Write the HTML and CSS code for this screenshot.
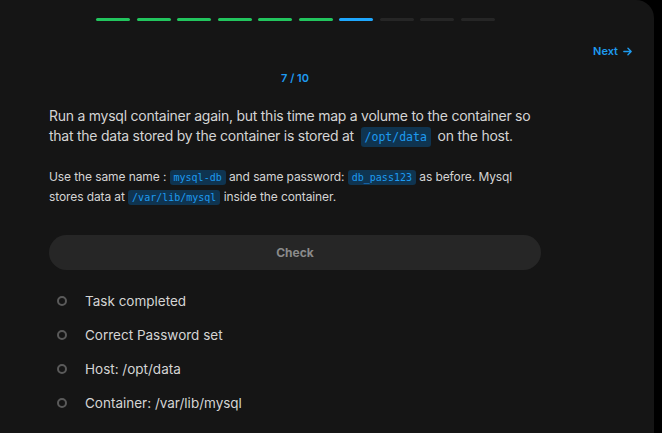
FILE: index.html
```html
<!DOCTYPE html>
<html>
<head>
<meta charset="utf-8">
<link rel="stylesheet" href="styles.css">
</head>
<body>
<div class="panel">
  <div class="progress">
    <span class="seg done"></span><span class="seg done"></span><span class="seg done"></span><span class="seg done"></span><span class="seg done"></span><span class="seg done"></span><span class="seg current"></span><span class="seg"></span><span class="seg"></span><span class="seg"></span>
  </div>
  <div class="nav">
    <a class="next">Next <svg width="11" height="11" viewBox="0 0 12 12" fill="none" stroke="currentColor" stroke-width="1.5" stroke-linecap="round" stroke-linejoin="round"><path d="M2 6h8M6.5 2.5 10 6l-3.5 3.5"/></svg></a>
  </div>
  <div class="content">
    <div class="counter">7 / 10</div>
    <p class="question">Run a mysql container again, but this time map a volume to the container so that the data stored by the container is stored at <code>/opt/data</code> on the host.</p>
    <p class="note">Use the same name : <code>mysql-db</code> and same password: <code>db_pass123</code> as before. Mysql stores data at <code>/var/lib/mysql</code> inside the container.</p>
    <button class="check">Check</button>
    <ul class="tasks">
      <li><span class="dot"></span>Task completed</li>
      <li><span class="dot"></span>Correct Password set</li>
      <li><span class="dot"></span>Host: /opt/data</li>
      <li><span class="dot"></span>Container: /var/lib/mysql</li>
    </ul>
  </div>
</div>
</body>
</html>
```
FILE: styles.css
```css
html, body {
  margin: 0;
  padding: 0;
  background: #000;
  height: 100%;
}
body {
  font-family: Inter, "Noto Sans", sans-serif;
  overflow: hidden;
}
.panel {
  width: 654px;
  height: 433px;
  background: #151515;
  border-top-right-radius: 18px;
  box-sizing: border-box;
  padding-top: 18px;
}
.progress {
  display: flex;
  gap: 6.5px;
  margin-left: 96px;
}
.seg {
  width: 34px;
  height: 3px;
  border-radius: 2px;
  background: #262626;
}
.seg.done { background: #22c55e; }
.seg.current { background: #1ea7fd; }
.nav {
  display: flex;
  justify-content: flex-end;
  padding-right: 21px;
  margin-top: 22px;
}
.next {
  color: #1e9bf0;
  font-size: 11px;
  font-weight: 600;
  display: flex;
  align-items: center;
  gap: 4px;
  height: 16px;
}
.content {
  width: 492px;
  margin-left: 49px;
}
.counter {
  text-align: center;
  color: #1e9bf0;
  font-size: 11px;
  font-weight: 600;
  margin-top: 12px;
  line-height: 14px;
}
.question {
  color: #d4d4d4;
  font-size: 14px;
  letter-spacing: -0.25px;
  line-height: 20px;
  margin: 21px 0 0;
}
.note {
  color: #d4d4d4;
  font-size: 12px;
  letter-spacing: -0.1px;
  line-height: 20px;
  margin: 21px 0 0;
}
code {
  font-family: "DejaVu Sans Mono", monospace;
  font-size: 10px;
  line-height: 1;
  color: #1e9bf0;
  background: #0f3450;
  padding: 2px 4px;
  border-radius: 3px;
  letter-spacing: 0;
}
.question code { font-size: 11.5px; padding: 3px 4px; margin: 0 3px; }
.check {
  display: block;
  width: 100%;
  height: 35px;
  margin-top: 28px;
  border: none;
  border-radius: 18px;
  background: #262626;
  color: #8a8a8a;
  font-family: Inter, "Noto Sans", sans-serif;
  font-size: 12px;
  font-weight: 700;
}
.tasks {
  list-style: none;
  margin: 14px 0 0;
  padding: 0;
}
.tasks li {
  display: flex;
  align-items: center;
  height: 34px;
  color: #d4d4d4;
  font-size: 13.5px;
}
.dot {
  width: 6px;
  height: 6px;
  border: 2px solid #5a5a5a;
  border-radius: 50%;
  margin: 0 18px 0 8px;
}
```
